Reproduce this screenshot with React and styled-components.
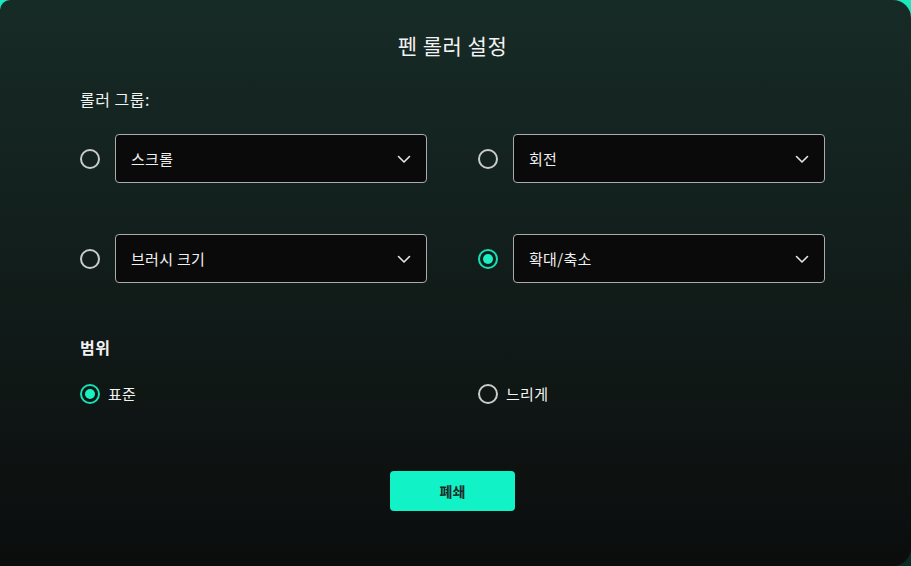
import React, { useState } from 'react';
import styled, { createGlobalStyle } from 'styled-components';

const GlobalStyle = createGlobalStyle`
html, body {
  margin: 0;
  padding: 0;
  height: 100%;
  background: linear-gradient(180deg, #1de9bd 0%, #0f3f35 60%, #0b2a24 100%);
}
#root {
  height: 100%;
}
* {
  box-sizing: border-box;
}
`;

const Dialog = styled.div`
height: 566px;
width: 911px;
border-radius: 10px 18px 18px 0;
background: linear-gradient(180deg, #172b26 0%, #121e1b 45%, #0b0d0d 100%);
font-family: "Noto Sans CJK KR", "Noto Sans", sans-serif;
color: #f2f2f2;
padding: 30px 86px 0 80px;
display: flex;
flex-direction: column;
`;

const Title = styled.h1`
margin: 0;
text-align: center;
font-size: 21px;
font-weight: 400;
line-height: 30px;
letter-spacing: 0.5px;
`;

const SectionLabel = styled.div`
margin-top: ${p => p.$top}px;
font-size: 16px;
font-weight: ${p => (p.$bold ? 700 : 400)};
line-height: 22px;
letter-spacing: 0.5px;
`;

const RollerGrid = styled.div`
margin-top: 24px;
display: grid;
grid-template-columns: 347px 347px;
column-gap: 51px;
row-gap: 51px;
`;

const RollerRow = styled.div`
display: flex;
align-items: center;
gap: 15px;
`;

const RadioDot = styled.span`
flex: none;
width: 20px;
height: 20px;
border-radius: 50%;
border: 2px solid ${p => (p.$on ? '#19dfb3' : '#c9cccb')};
display: flex;
align-items: center;
justify-content: center;
cursor: pointer;
&::after {
  content: '';
  width: 10px;
  height: 10px;
  border-radius: 50%;
  background: ${p => (p.$on ? '#1af0c2' : 'transparent')};
}
`;

const Select = styled.div`
flex: 1;
height: 49px;
background: #0a0a0a;
border: 1.5px solid #a9acab;
border-radius: 4px;
display: flex;
align-items: center;
justify-content: space-between;
padding: 0 14px 0 15px;
font-size: 15px;
letter-spacing: 0.3px;
color: #f0f0f0;
cursor: pointer;
`;

const RangeRow = styled.div`
margin-top: 25px;
display: grid;
grid-template-columns: 347px 347px;
column-gap: 51px;
`;

const RangeOption = styled.label`
display: flex;
align-items: center;
gap: 8px;
font-size: 15px;
letter-spacing: 0.3px;
cursor: pointer;
`;

const Footer = styled.div`
margin-top: 67px;
display: flex;
justify-content: center;
`;

const CloseButton = styled.button`
width: 125px;
height: 40px;
border: none;
border-radius: 4px;
background: #11f3c6;
color: #1b2a26;
font-family: "Noto Sans CJK KR", sans-serif;
font-size: 14px;
font-weight: 700;
cursor: pointer;
`;

const Chevron = () => (
  <svg width="16" height="16" viewBox="0 0 16 16" fill="none">
    <path d="M2.5 5.5 L8 11 L13.5 5.5" stroke="#e6e6e6" strokeWidth="1.6" strokeLinecap="round" strokeLinejoin="round" />
  </svg>
);

const rollers = ['스크롤', '회전', '브러시 크기', '확대/축소'];

const App = () => {
  const [roller, setRoller] = useState(3);
  const [range, setRange] = useState('표준');

  return (
    <Dialog>
      <GlobalStyle />
      <Title>펜 롤러 설정</Title>
      <SectionLabel $top={28}>롤러 그룹:</SectionLabel>
      <RollerGrid>
        {rollers.map((r, i) => (
          <RollerRow key={r}>
            <RadioDot $on={roller === i} onClick={() => setRoller(i)} />
            <Select>
              <span>{r}</span>
              <Chevron />
            </Select>
          </RollerRow>
        ))}
      </RollerGrid>
      <SectionLabel $top={53} $bold>범위</SectionLabel>
      <RangeRow>
        {['표준', '느리게'].map(o => (
          <RangeOption key={o} onClick={() => setRange(o)}>
            <RadioDot $on={range === o} />
            {o}
          </RangeOption>
        ))}
      </RangeRow>
      <Footer>
        <CloseButton>폐쇄</CloseButton>
      </Footer>
    </Dialog>
  );
};

export default App;
